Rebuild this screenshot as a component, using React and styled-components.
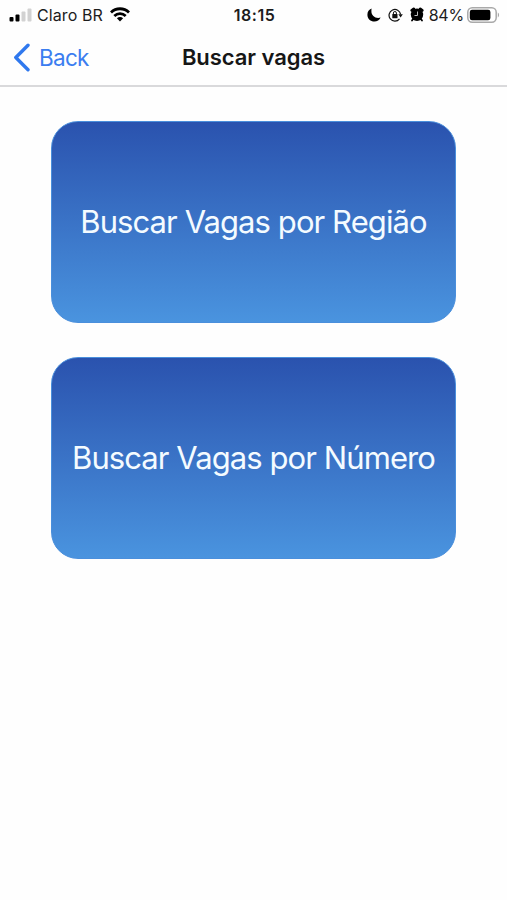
import React from 'react'
import styled, { createGlobalStyle } from 'styled-components';

const GlobalStyle = createGlobalStyle`
    * {
        box-sizing: border-box;
    }
    body {
        margin: 0;
        background-color: #fefefe;
        font-family: Inter, 'Liberation Sans', sans-serif;
    }
`
const Container = styled.div`
    height: 100vh;
    display: flex;
    flex-direction: column;
    background-color: #fefefe;
`
const StatusBar = styled.div`
    height: 29px;
    display: grid;
    grid-template-columns: 1fr auto 1fr;
    align-items: center;
    padding: 0 7px 0 9px;
    color: #1c1c1c;
`
const Carrier = styled.div`
    display: flex;
    align-items: center;
`
const CarrierName = styled.span`
    margin: 0 7px 0 5px;
    font-size: 16px;
    line-height: 20px;
    letter-spacing: 0.1px;
`
const Clock = styled.div`
    font-size: 16px;
    font-weight: 600;
    line-height: 20px;
    letter-spacing: 0.5px;
`
const Indicators = styled.div`
    display: flex;
    align-items: center;
    justify-content: flex-end;
    gap: 7px;
`
const Battery = styled.div`
    display: flex;
    align-items: center;
    gap: 3px;
    margin-left: -2px;
`
const Percent = styled.span`
    font-size: 16px;
    line-height: 20px;
    letter-spacing: -0.2px;
`
const NavBar = styled.header`
    height: 58px;
    display: grid;
    grid-template-columns: 1fr auto 1fr;
    align-items: center;
    padding: 0 13px;
    border-bottom: 2px solid #d9d9db;
`
const BackButton = styled.button`
    display: flex;
    align-items: center;
    gap: 8px;
    padding: 2px 0 0;
    border: none;
    background: none;
    color: #3b7df0;
    font-family: inherit;
    font-size: 22.5px;
    line-height: 28px;
    letter-spacing: -0.7px;
    cursor: pointer;
`
const Title = styled.h1`
    margin: 0;
    color: #161616;
    font-size: 22px;
    font-weight: 600;
    line-height: 28px;
    letter-spacing: -0.05px;
`
const Options = styled.main`
    display: flex;
    flex-direction: column;
    align-items: center;
    gap: 34px;
    padding-top: 34px;
`
const Option = styled.button`
    width: 405px;
    height: 202px;
    padding: 0;
    border: 1px solid #4a8fdc;
    border-radius: 27px;
    background: linear-gradient(#2a52ae, #4a94df) border-box;
    color: #f4fbff;
    font-family: inherit;
    font-size: 31px;
    line-height: 40px;
    letter-spacing: -0.92px;
    white-space: nowrap;
    cursor: pointer;
`

const SignalIcon = () => (
    <svg width="23" height="16" viewBox="0 0 23 16">
        <rect x="0.5" y="10" width="4" height="4.5" rx="1" fill="#000" />
        <rect x="6.5" y="7.5" width="4" height="7" rx="1" fill="#000" />
        <rect x="12.5" y="4.5" width="4" height="10" rx="1" fill="#d2d2d2" />
        <rect x="18.5" y="1.5" width="4" height="13" rx="1" fill="#d2d2d2" />
    </svg>
)

const WifiIcon = () => (
    <svg width="20" height="15" viewBox="0 0 20 15" fill="none" stroke="#000" strokeWidth="2.8">
        <path d="M1 5.4C6 0.5 14 0.5 19 5.4" />
        <path d="M4.3 8.9C7.6 5.8 12.4 5.8 15.7 8.9" />
        <path d="M10 14.4L6.9 11.3C8.6 9.7 11.4 9.7 13.1 11.3Z" fill="#000" stroke="none" />
    </svg>
)

const MoonIcon = () => (
    <svg width="14" height="14" viewBox="0 0 14 14">
        <path d="M4.6 0.6C2 1.6 0.4 3.8 0.4 6.7C0.4 10.6 3.5 13.6 7.4 13.6C10.2 13.6 12.5 12.1 13.6 9.5C12.8 9.8 12 9.9 11.2 9.9C7.4 9.9 4.4 7 4.4 3.2C4.4 2.3 4.4 1.4 4.6 0.6Z" fill="#000" />
    </svg>
)

const RotationLockIcon = () => (
    <svg width="15" height="14" viewBox="0 0 15 14" fill="none" stroke="#111">
        <path d="M11.5 10.8A5.8 5.8 0 1 1 12.6 6.4" strokeWidth="1.2" />
        <path d="M10.4 6.3H14.8L12.6 9.4Z" fill="#111" stroke="none" />
        <rect x="4.3" y="6.1" width="5.2" height="4.1" rx="0.5" fill="#111" stroke="none" />
        <path d="M5.4 6.3V5A1.5 1.5 0 0 1 8.4 5V6.3" strokeWidth="1" />
    </svg>
)

const AlarmIcon = () => (
    <svg width="14" height="15" viewBox="0 0 14 15">
        <circle cx="7" cy="7.8" r="6.2" fill="#000" />
        <path d="M1.8 3.4L3.8 1.9M12.2 3.4L10.2 1.9" stroke="#000" strokeWidth="2.8" strokeLinecap="round" />
        <path d="M2.9 12.2L2 13.6M11.1 12.2L12 13.6" stroke="#000" strokeWidth="1.8" strokeLinecap="round" />
        <path d="M7.5 4.5V8.5H4.5" fill="none" stroke="#bbb" strokeWidth="1" />
    </svg>
)

const BatteryIcon = () => (
    <svg width="33" height="16" viewBox="0 0 33 16">
        <rect x="0.8" y="0.8" width="28.4" height="14.4" rx="4.4" fill="#fff" stroke="#a9a9a9" strokeWidth="1.5" />
        <rect x="2.8" y="2.8" width="20.6" height="10.4" rx="2.2" fill="#000" />
        <path d="M30.8 5.6C32.5 6.3 32.5 9.7 30.8 10.4Z" fill="#a9a9a9" />
    </svg>
)

const BackIcon = () => (
    <svg width="18" height="30" viewBox="0 0 18 30">
        <path d="M15 2.3L2.8 14.5L15 26.7" fill="none" stroke="#2f78ee" strokeWidth="3.4" strokeLinecap="round" strokeLinejoin="round" />
    </svg>
)

const App = () => {
    return (
        <Container>
            <GlobalStyle />
            <StatusBar>
                <Carrier>
                    <SignalIcon />
                    <CarrierName>Claro BR</CarrierName>
                    <WifiIcon />
                </Carrier>
                <Clock>18:15</Clock>
                <Indicators>
                    <MoonIcon />
                    <RotationLockIcon />
                    <AlarmIcon />
                    <Battery>
                        <Percent>84%</Percent>
                        <BatteryIcon />
                    </Battery>
                </Indicators>
            </StatusBar>
            <NavBar>
                <BackButton>
                    <BackIcon />
                    Back
                </BackButton>
                <Title>Buscar vagas</Title>
            </NavBar>
            <Options>
                <Option>Buscar Vagas por Região</Option>
                <Option>Buscar Vagas por Número</Option>
            </Options>
        </Container>
    )
}

export default App
